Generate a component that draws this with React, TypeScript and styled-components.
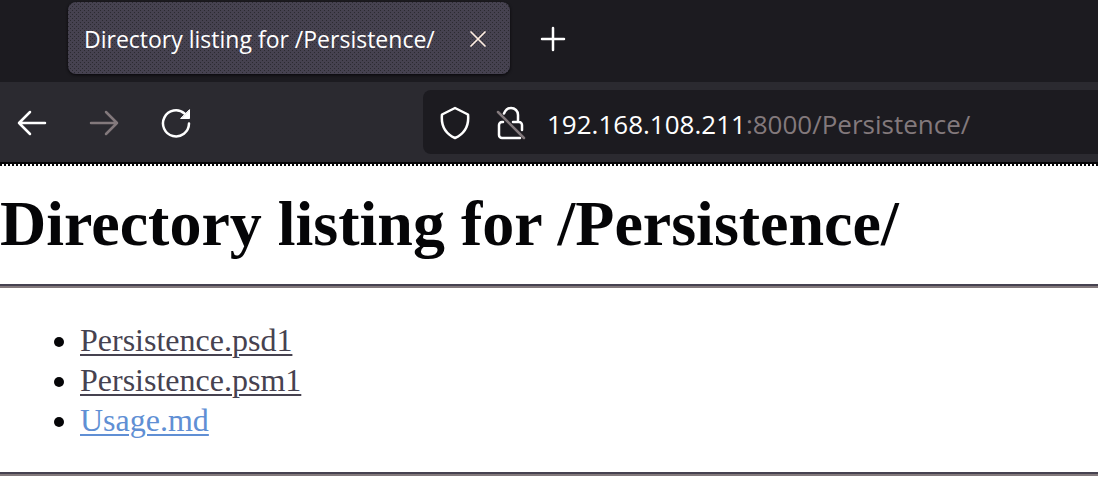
import React from "react";
import styled, { createGlobalStyle } from "styled-components";

const GlobalStyle = createGlobalStyle`
  * { box-sizing: border-box; }
  body { margin: 0; background: #fff; }
`;

const TabStrip = styled.div`
  display: flex;
  align-items: center;
  gap: 20px;
  height: 82px;
  padding: 2px 68px 8px;
  background: #1c1b20;
  font-family: "Open Sans", "Noto Sans", sans-serif;
`;

const Tab = styled.div`
  display: flex;
  align-items: center;
  justify-content: space-between;
  flex: 0 1 442px;
  min-width: 0;
  height: 72px;
  padding: 0 16px;
  border-radius: 8px;
  background-color: #464250;
  background-image:
    conic-gradient(from 270deg at 1px 1px, #2b2a30 90deg, transparent 0),
    conic-gradient(from 270deg at 1px 1px, #2b2a30 90deg, transparent 0);
  background-position: 0 0, 2px 2px;
  background-size: 4px 4px;
  box-shadow: 0 1px 3px #08070a;
`;

const TabTitle = styled.span`
  padding-top: 2px;
  overflow: hidden;
  color: #fff;
  font-size: 23px;
  line-height: 32px;
  white-space: nowrap;
`;

const IconButton = styled.button<{ $width: number }>`
  display: flex;
  flex: none;
  align-items: center;
  justify-content: center;
  width: ${(p) => p.$width}px;
  height: 48px;
  padding: 2px 0 0;
  border: 0;
  background: none;
  color: #fff;

  &:disabled { color: #83797c; }
`;

const Toolbar = styled.div`
  display: flex;
  align-items: center;
  height: 80px;
  background: #2b2a30;
`;

const NavGroup = styled.nav`
  display: flex;
  flex: none;
  gap: 8px;
  width: 423px;
`;

const AddressBar = styled.div`
  display: flex;
  flex: 1;
  align-items: center;
  min-width: 0;
  height: 64px;
  padding-left: 4px;
  border-radius: 8px 0 0 8px;
  background: #1c1b20;
`;

const Address = styled.div`
  margin-left: 8px;
  padding-top: 4px;
  color: #83797c;
  font-family: "Open Sans", "Noto Sans", sans-serif;
  font-size: 26px;
  line-height: 36px;
  white-space: nowrap;
`;

const Host = styled.span`
  color: #fff;
`;

const DottedEdge = styled.div`
  height: 4px;
  border-top: 2px solid #050507;
  background: repeating-linear-gradient(90deg, #050507 0 2px, #fff 2px 4px);
`;

const Page = styled.main`
  color: #050507;
  font-family: "Liberation Serif", "Times New Roman", serif;
`;

const Heading = styled.h1`
  margin: 0;
  padding: 20px 0 22px;
  font-size: 64px;
  line-height: 76px;
`;

const Rule = styled.hr`
  height: 4px;
  margin: 0;
  border: 0;
  border-top: 2px solid #464250;
  background: #83797c;
`;

const FileList = styled.ul`
  margin: 0;
  padding: 32px 0 32px 80px;
  font-size: 32px;
  line-height: 40px;
`;

const FileLink = styled.a<{ $visited?: boolean }>`
  color: ${(p) => (p.$visited ? "#464250" : "#608fd4")};
  text-decoration-thickness: 2px;
  text-underline-offset: 3px;
`;

const files = [
  { name: "Persistence.psd1", visited: true },
  { name: "Persistence.psm1", visited: true },
  { name: "Usage.md", visited: false },
];

const stroke = { fill: "none", stroke: "currentColor", strokeWidth: 2.5, strokeLinecap: "round", strokeLinejoin: "round" } as const;

export default function App() {
  return (
    <>
      <GlobalStyle />
      <header>
        <TabStrip>
          <Tab>
            <TabTitle>Directory listing for /Persistence/</TabTitle>
            <IconButton $width={32} aria-label="Close tab">
              <svg width="16" height="16" viewBox="0 0 16 16" {...stroke} strokeWidth={1.7} stroke="#ffeee2">
                <path d="M1 1l14 14M15 1L1 15" />
              </svg>
            </IconButton>
          </Tab>
          <IconButton $width={46} aria-label="New tab">
            <svg width="26" height="26" viewBox="0 0 26 26" {...stroke}>
              <path d="M13 2v22M2 13h22" />
            </svg>
          </IconButton>
        </TabStrip>
        <Toolbar>
          <NavGroup aria-label="History">
            <IconButton $width={64} aria-label="Back">
              <svg width="30" height="26" viewBox="0 0 30 26" {...stroke}>
                <path d="M28 13H2M13 2L2 13l11 11" />
              </svg>
            </IconButton>
            <IconButton $width={64} aria-label="Forward" disabled>
              <svg width="30" height="26" viewBox="0 0 30 26" {...stroke}>
                <path d="M2 13h26M17 2l11 11-11 11" />
              </svg>
            </IconButton>
            <IconButton $width={64} aria-label="Reload">
              <svg width="30" height="30" viewBox="0 0 30 30" {...stroke}>
                <path d="M28 15.500A13 13 0 1 1 23.500 5.500" />
                <path d="M28.500 2v8.500H20z" fill="currentColor" strokeWidth="1" />
              </svg>
            </IconButton>
          </NavGroup>
          <AddressBar>
            <IconButton $width={56} aria-label="Tracking protection">
              <svg width="30" height="34" viewBox="0 0 30 34" {...stroke}>
                <path d="M15 2L2 8.500C1 18 4 27 15 32 26 27 29 18 28 8.500z" />
              </svg>
            </IconButton>
            <IconButton $width={56} aria-label="Connection not secure">
              <svg width="30" height="34" viewBox="0 0 30 34" {...stroke}>
                <path d="M8 7.500C9.500 4 12 2 15 2c4 0 7 3 7 7v7M7 16H6a3 3 0 0 0-3 3v10a3 3 0 0 0 3 3H24M17 16h6a3 3 0 0 1 3 3v5" />
                <path d="M2 6l26 26" stroke="#83797c" />
              </svg>
            </IconButton>
            <Address>
              <Host>192.168.108.211</Host>:8000/Persistence/
            </Address>
          </AddressBar>
        </Toolbar>
        <DottedEdge />
      </header>
      <Page>
        <Heading>Directory listing for /Persistence/</Heading>
        <Rule />
        <FileList>
          {files.map((file) => (
            <li key={file.name}>
              <FileLink href={`#${file.name}`} $visited={file.visited}>
                {file.name}
              </FileLink>
            </li>
          ))}
        </FileList>
        <Rule />
      </Page>
    </>
  );
}
